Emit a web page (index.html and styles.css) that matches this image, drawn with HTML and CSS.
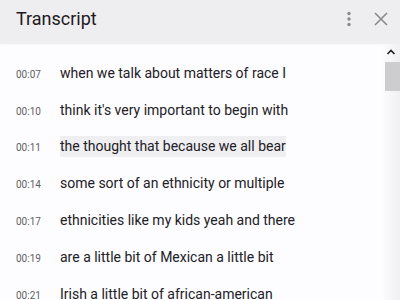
FILE: index.html
```html
<!DOCTYPE html>
<html>
<head>
<meta charset="utf-8">
<link rel="stylesheet" href="styles.css">
</head>
<body>
<div class="panel">
  <header class="header">
    <h1 class="title">Transcript</h1>
    <div class="actions">
      <svg class="icon-more" width="20" height="20" viewBox="0 0 20 20"><circle cx="10" cy="4.5" r="1.7" fill="#8a8a8a"/><circle cx="10" cy="10" r="1.7" fill="#8a8a8a"/><circle cx="10" cy="15.5" r="1.7" fill="#8a8a8a"/></svg>
      <svg class="icon-close" width="18" height="18" viewBox="0 0 18 18"><path d="M3 3 L15 15 M15 3 L3 15" stroke="#8a8a8a" stroke-width="1.6" fill="none"/></svg>
    </div>
  </header>
  <div class="body">
    <ul class="list">
      <li class="row"><span class="time">00:07</span><span class="text">when we talk about matters of race I</span></li>
      <li class="row"><span class="time">00:10</span><span class="text">think it's very important to begin with</span></li>
      <li class="row"><span class="time">00:11</span><span class="text active">the thought that because we all bear</span></li>
      <li class="row"><span class="time">00:14</span><span class="text">some sort of an ethnicity or multiple</span></li>
      <li class="row"><span class="time">00:17</span><span class="text">ethnicities like my kids yeah and there</span></li>
      <li class="row"><span class="time">00:19</span><span class="text">are a little bit of Mexican a little bit</span></li>
      <li class="row"><span class="time">00:21</span><span class="text">Irish a little bit of african-american</span></li>
    </ul>
    <div class="scrollbar">
      <svg class="arrow" width="10" height="8" viewBox="0 0 10 8"><path d="M1.5 6 L5 2.5 L8.5 6" stroke="#222" stroke-width="1.6" fill="none"/></svg>
      <div class="thumb"></div>
    </div>
  </div>
</div>
</body>
</html>
```
FILE: styles.css
```css
html, body {
  margin: 0;
  padding: 0;
}
body {
  width: 400px;
  height: 300px;
  overflow: hidden;
  background: #fdfcfe;
  font-family: Roboto, "Liberation Sans", sans-serif;
}
.panel {
  display: flex;
  flex-direction: column;
  height: 300px;
}
.header {
  height: 44px;
  flex: none;
  background: #eeedf0;
  display: flex;
  align-items: center;
  justify-content: space-between;
  padding: 0 10px 0 16px;
  box-shadow: 0 1px 2px rgba(0,0,0,0.03);
}
.title {
  margin: 0;
  font-size: 18px;
  font-weight: 400;
  color: #1e1a22;
  padding-bottom: 7px;
}
.actions {
  display: flex;
  align-items: center;
  gap: 13px;
  padding-bottom: 7px;
}
.icon-more, .icon-close {
  display: block;
}
.body {
  flex: 1;
  display: flex;
  position: relative;
}
.list {
  flex: 1;
  list-style: none;
  margin: 0;
  padding: 11px 0 0 0;
}
.row {
  height: 36.8px;
  display: flex;
  align-items: center;
}
.time {
  width: 44px;
  padding-left: 16px;
  font-size: 10px;
  color: #5f5f66;
  padding-top: 2px;
}
.text {
  font-size: 14px;
  color: #222026;
  padding: 2px 0;
  line-height: 17px;
}
.text.active {
  background: #efeef1;
}
.scrollbar {
  width: 17px;
  flex: none;
  background: linear-gradient(to right, #fbfafc, #f0eff2);
  display: flex;
  flex-direction: column;
  align-items: flex-end;
}
.arrow {
  margin: 4px 4px 0 0;
  display: block;
}
.thumb {
  margin-top: 6px;
  width: 15px;
  height: 29px;
  background: #cdcdcf;
}
```
